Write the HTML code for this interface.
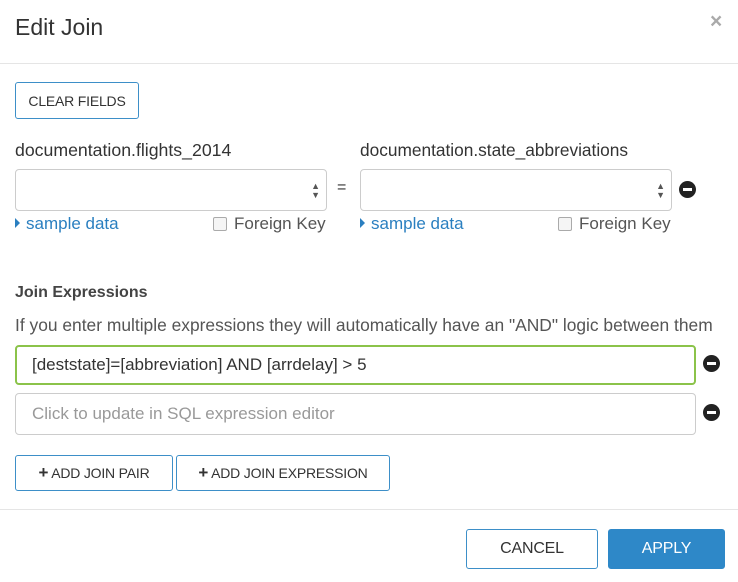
<!DOCTYPE html>
<html><head><style>
body{margin:0;width:738px;height:582px;background:#fff;font-family:"Liberation Sans",sans-serif;color:#333;position:relative;overflow:hidden}
.a{position:absolute;white-space:nowrap}
.btn{position:absolute;border:1px solid #3d8fc8;border-radius:3px;background:#fff;box-sizing:border-box;font-size:14px;color:#333;display:flex;align-items:center;justify-content:center;letter-spacing:-0.2px}
.sel{position:absolute;border:1px solid #ccc;border-radius:4px;box-sizing:border-box;height:42px;top:169px}
.arr{position:absolute;right:6px;top:12px;font-size:9px;line-height:9px;color:#555}
.minus{position:absolute;width:17px;height:17px;border-radius:50%;background:#222}
.minus:after{content:"";position:absolute;left:4px;top:7px;width:9px;height:3px;background:#fff}
.sd{position:absolute;top:214px;font-size:17px;color:#2a7fc0}
.sd:before{content:"";display:inline-block;border-left:5px solid #2a7fc0;border-top:5px solid transparent;border-bottom:5px solid transparent;margin-right:6px;vertical-align:1px}
.cb{position:absolute;top:217px;width:12px;height:12px;border:1px solid #aaa;border-radius:2px;background:#f5f5f5}
.fk{position:absolute;top:214px;font-size:17px;color:#555}
.inp{position:absolute;left:15px;width:681px;box-sizing:border-box;border-radius:4px;font-size:17px;padding-left:16px;display:flex;align-items:center}
</style></head><body>
<div class="a" style="left:15px;top:14px;font-size:23px;color:#333">Edit Join</div>
<div class="a" style="left:710px;top:10px;font-size:21px;color:#aaa;font-weight:bold">×</div>
<div class="a" style="left:0;top:63px;width:738px;height:1px;background:#e5e5e5"></div>
<div class="btn" style="left:15px;top:82px;width:124px;height:37px">CLEAR FIELDS</div>
<div class="a" style="left:15px;top:140px;font-size:17.7px">documentation.flights_2014</div>
<div class="a" style="left:360px;top:140px;font-size:17.3px">documentation.state_abbreviations</div>
<div class="sel" style="left:15px;width:312px"><div class="arr">▲<br>▼</div></div>
<div class="a" style="left:337px;top:179px;font-size:16px">=</div>
<div class="sel" style="left:360px;width:312px"><div class="arr">▲<br>▼</div></div>
<div class="minus" style="left:679px;top:181px"></div>
<div class="sd" style="left:15px">sample data</div>
<div class="cb" style="left:213px"></div><div class="fk" style="left:234px">Foreign Key</div>
<div class="sd" style="left:360px">sample data</div>
<div class="cb" style="left:558px"></div><div class="fk" style="left:579px">Foreign Key</div>
<div class="a" style="left:15px;top:284px;font-size:16px;font-weight:bold;color:#444">Join Expressions</div>
<div class="a" style="left:15px;top:315px;font-size:17.4px;color:#555">If you enter multiple expressions they will automatically have an "AND" logic between them</div>
<div class="inp" style="top:345px;height:40px;border:2px solid #8bc34a;padding-left:15px;color:#333">[deststate]=[abbreviation] AND [arrdelay] &gt; 5</div>
<div class="minus" style="left:703px;top:355px"></div>
<div class="inp" style="top:393px;height:42px;border:1px solid #ccc;color:#999">Click to update in SQL expression editor</div>
<div class="minus" style="left:703px;top:404px"></div>
<div class="btn" style="left:15px;top:455px;width:158px;height:36px"><b style="font-size:17px;margin-right:3px">+</b>ADD JOIN PAIR</div>
<div class="btn" style="left:176px;top:455px;width:214px;height:36px"><b style="font-size:17px;margin-right:3px">+</b>ADD JOIN EXPRESSION</div>
<div class="a" style="left:0;top:509px;width:738px;height:1px;background:#e5e5e5"></div>
<div class="btn" style="left:466px;top:529px;width:132px;height:40px;font-size:16px">CANCEL</div>
<div class="btn" style="left:608px;top:529px;width:117px;height:40px;font-size:16px;background:#2e88c8;border-color:#2e88c8;color:#fff">APPLY</div>
</body></html>
